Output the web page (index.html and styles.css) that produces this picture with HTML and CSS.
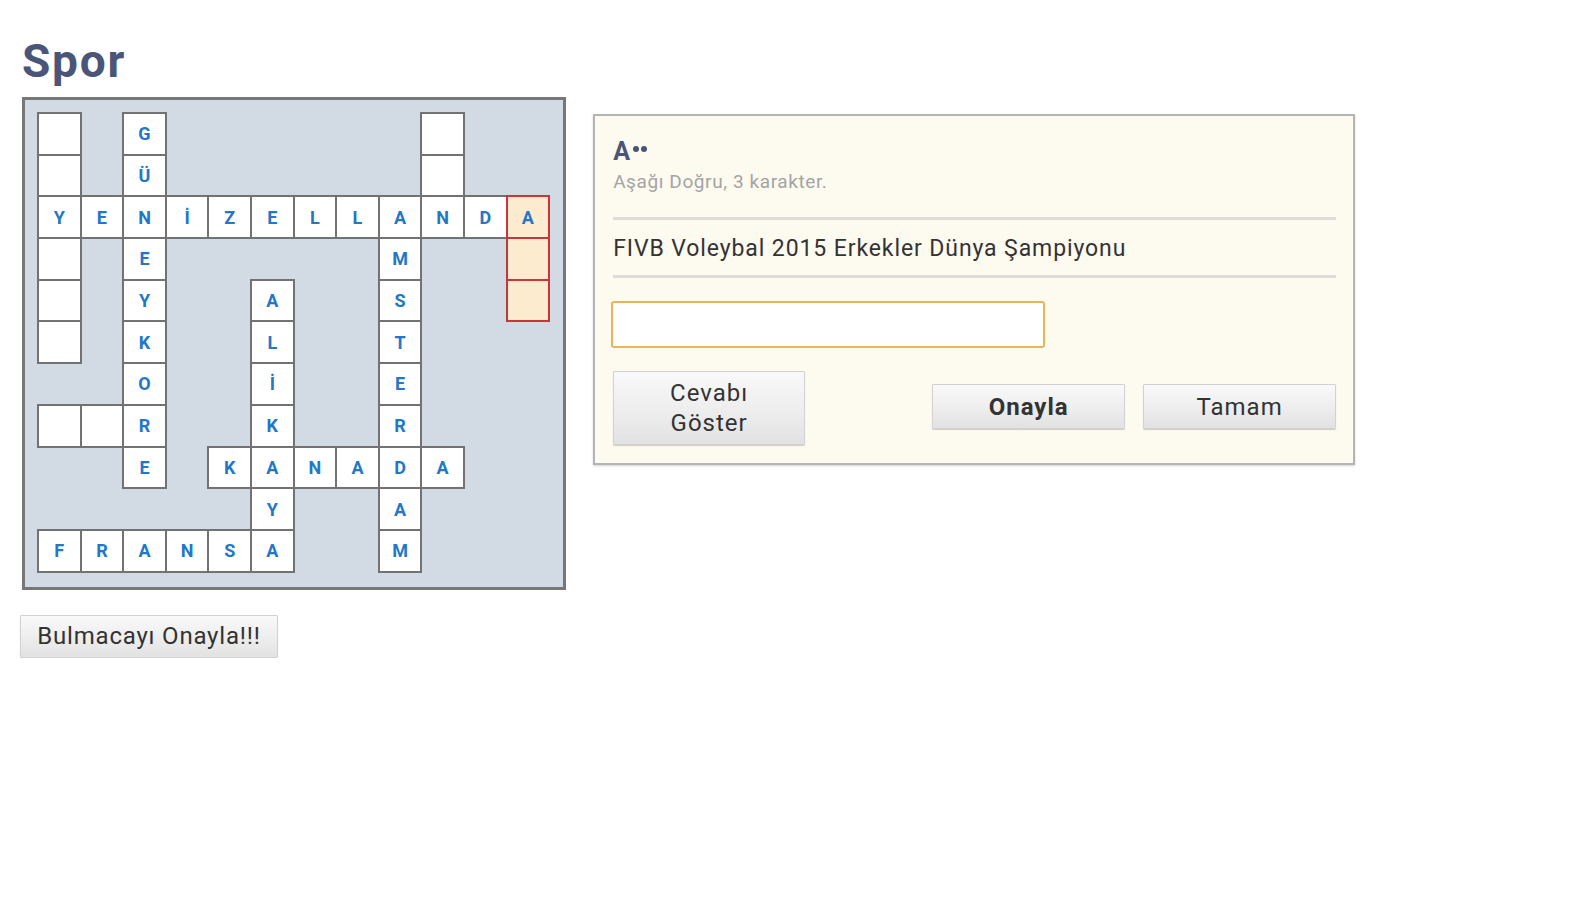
FILE: index.html
```html
<!DOCTYPE html>
<html lang="tr">
<head>
<meta charset="utf-8">
<title>Spor</title>
<link rel="stylesheet" href="styles.css">
</head>
<body>
<div class="page">
  <h1 class="title">Spor</h1>
  <div class="main">
    <div class="left">
      <div class="board">
        <div class="grid">
          <div class="c"></div><div class="x"></div><div class="c">G</div><div class="x"></div><div class="x"></div><div class="x"></div><div class="x"></div><div class="x"></div><div class="x"></div><div class="c"></div><div class="x"></div><div class="x"></div>
          <div class="c"></div><div class="x"></div><div class="c">Ü</div><div class="x"></div><div class="x"></div><div class="x"></div><div class="x"></div><div class="x"></div><div class="x"></div><div class="c"></div><div class="x"></div><div class="x"></div>
          <div class="c">Y</div><div class="c">E</div><div class="c">N</div><div class="c">İ</div><div class="c">Z</div><div class="c">E</div><div class="c">L</div><div class="c">L</div><div class="c">A</div><div class="c">N</div><div class="c">D</div><div class="c hl">A</div>
          <div class="c"></div><div class="x"></div><div class="c">E</div><div class="x"></div><div class="x"></div><div class="x"></div><div class="x"></div><div class="x"></div><div class="c">M</div><div class="x"></div><div class="x"></div><div class="c hl"></div>
          <div class="c"></div><div class="x"></div><div class="c">Y</div><div class="x"></div><div class="x"></div><div class="c">A</div><div class="x"></div><div class="x"></div><div class="c">S</div><div class="x"></div><div class="x"></div><div class="c hl"></div>
          <div class="c"></div><div class="x"></div><div class="c">K</div><div class="x"></div><div class="x"></div><div class="c">L</div><div class="x"></div><div class="x"></div><div class="c">T</div><div class="x"></div><div class="x"></div><div class="x"></div>
          <div class="x"></div><div class="x"></div><div class="c">O</div><div class="x"></div><div class="x"></div><div class="c">İ</div><div class="x"></div><div class="x"></div><div class="c">E</div><div class="x"></div><div class="x"></div><div class="x"></div>
          <div class="c"></div><div class="c"></div><div class="c">R</div><div class="x"></div><div class="x"></div><div class="c">K</div><div class="x"></div><div class="x"></div><div class="c">R</div><div class="x"></div><div class="x"></div><div class="x"></div>
          <div class="x"></div><div class="x"></div><div class="c">E</div><div class="x"></div><div class="c">K</div><div class="c">A</div><div class="c">N</div><div class="c">A</div><div class="c">D</div><div class="c">A</div><div class="x"></div><div class="x"></div>
          <div class="x"></div><div class="x"></div><div class="x"></div><div class="x"></div><div class="x"></div><div class="c">Y</div><div class="x"></div><div class="x"></div><div class="c">A</div><div class="x"></div><div class="x"></div><div class="x"></div>
          <div class="c">F</div><div class="c">R</div><div class="c">A</div><div class="c">N</div><div class="c">S</div><div class="c">A</div><div class="x"></div><div class="x"></div><div class="c">M</div><div class="x"></div><div class="x"></div><div class="x"></div>
        </div>
      </div>
      <button class="btn btn-check" type="button">Bulmacayı Onayla!!!</button>
    </div>
    <div class="panel">
      <div class="word">A<span class="dot"></span><span class="dot"></span></div>
      <div class="dir">Aşağı Doğru, 3 karakter.</div>
      <div class="rule rule-top"></div>
      <div class="clue">FIVB Voleybal 2015 Erkekler Dünya Şampiyonu</div>
      <div class="rule rule-bottom"></div>
      <input class="answer" type="text">
      <div class="actions">
        <button class="btn btn-show" type="button">Cevabı<br>Göster</button>
        <button class="btn btn-ok" type="button">Onayla</button>
        <button class="btn btn-done" type="button">Tamam</button>
      </div>
    </div>
  </div>
</div>
</body>
</html>
```

FILE: styles.css
```css
html, body {
  margin: 0;
  padding: 0;
  background: #ffffff;
}

body {
  font-family: Roboto, "Liberation Sans", Arial, sans-serif;
  color: #333333;
}

.page {
  padding: 35px 22px 0 22px;
}

.title {
  margin: 0 0 10px 0;
  font-family: Roboto, "Liberation Sans", sans-serif;
  font-weight: 700;
  font-size: 46px;
  line-height: 52px;
  color: #4a5578;
  letter-spacing: 1.8px;
}

.main {
  display: flex;
  align-items: flex-start;
  gap: 27px;
}

.left {
  display: flex;
  flex-direction: column;
  align-items: flex-start;
}

.board {
  border: 3px solid #777777;
  background: #d2dbe4;
  padding: 13px 14px 15px 13px;
}

.grid {
  display: grid;
  grid-template-columns: repeat(12, 42.6px);
  grid-template-rows: repeat(11, 41.7px);
}

.c {
  box-sizing: border-box;
  background: #ffffff;
  border: 1px solid #727272;
  box-shadow: 0 0 0 1px #727272;
  display: flex;
  align-items: center;
  justify-content: center;
  font-family: Roboto, "Liberation Sans", sans-serif;
  font-weight: 700;
  font-size: 18px;
  color: #2377c6;
}

.c.hl {
  background: #fdebcf;
  border-color: #c9353a;
  box-shadow: 0 0 0 1px #c9353a;
}

.btn {
  font-family: Roboto, "Liberation Sans", sans-serif;
  font-size: 24px;
  letter-spacing: 1px;
  color: #333333;
  background: linear-gradient(to bottom, #f9f9f9 0%, #ececec 60%, #e2e2e2 100%);
  border: 1px solid #d2d2d2;
  border-radius: 1px;
  box-shadow: 0 1px 1px rgba(0, 0, 0, 0.18);
  padding: 0;
  cursor: pointer;
}

.btn-check {
  margin: 25px 0 0 -2px;
  width: 258px;
  height: 43px;
  letter-spacing: 0.8px;
}

.panel {
  margin-top: 17px;
  width: 762px;
  box-sizing: border-box;
  background: #fdfaf0;
  border: 2px solid #b4b4b4;
  box-shadow: 0 1px 2px rgba(0, 0, 0, 0.18);
  padding: 20px 17px 18px 18px;
  display: flex;
  flex-direction: column;
}

.word {
  font-weight: 700;
  font-size: 25px;
  line-height: 32px;
  color: #4a5578;
  height: 32px;
}

.dot {
  display: inline-block;
  width: 6px;
  height: 6px;
  border-radius: 50%;
  background: #4a5578;
  vertical-align: 8px;
  margin-left: 2px;
}

.dot:first-of-type {
  margin-left: 3px;
}

.dir {
  margin-top: 3px;
  font-size: 19px;
  line-height: 22px;
  letter-spacing: 0.6px;
  color: #a4a4a4;
}

.rule {
  height: 3px;
  background: #dedcd6;
}

.rule-top {
  margin-top: 24px;
}

.clue {
  margin-top: 15px;
  font-size: 23px;
  line-height: 28px;
  letter-spacing: 0.9px;
  color: #333333;
}

.rule-bottom {
  margin-top: 12px;
}

.answer {
  margin: 23px 0 0 -2px;
  width: 434px;
  height: 47px;
  box-sizing: border-box;
  border: 2px solid #e8b65a;
  border-radius: 3px;
  background: #ffffff;
  outline: none;
  font-size: 20px;
  padding: 0 10px;
}

.actions {
  margin-top: 23px;
  display: flex;
  align-items: center;
}

.btn-show {
  width: 192px;
  height: 74px;
  line-height: 30px;
}

.btn-ok {
  margin-left: auto;
  margin-bottom: 3px;
  width: 193px;
  height: 45px;
  font-weight: 700;
}

.btn-done {
  margin-left: 18px;
  margin-bottom: 3px;
  width: 193px;
  height: 45px;
}
```
